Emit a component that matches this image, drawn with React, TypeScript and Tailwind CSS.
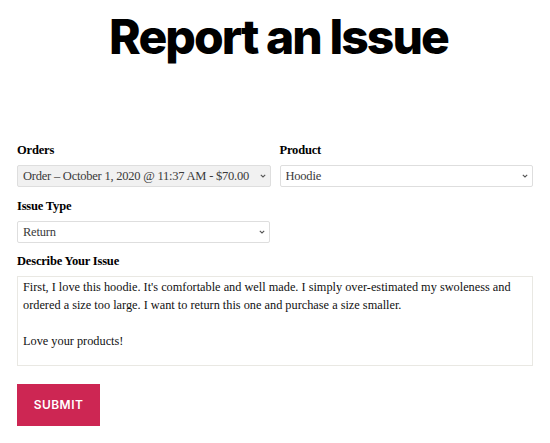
import { useState } from "react";

type SelectFieldProps = {
  label: string;
  value: string;
  options: string[];
  muted?: boolean;
};

function Chevron() {
  return (
    <svg
      className="pointer-events-none absolute right-[5px] top-1/2 -translate-y-1/2"
      width="6"
      height="4"
      viewBox="0 0 6 4"
      fill="none"
    >
      <path d="M.8.8 3 3 5.2.8" stroke="#555" strokeWidth="1.1" />
    </svg>
  );
}

function SelectField({ label, value, options, muted }: SelectFieldProps) {
  const [current, setCurrent] = useState(value);
  return (
    <div>
      <label className="block text-[12.5px] font-bold leading-[20px] tracking-[-0.015em] text-black">
        {label}
      </label>
      <div className="relative mt-[5px]">
        <select
          value={current}
          onChange={(e) => setCurrent(e.target.value)}
          className={`block h-[22px] w-full appearance-none rounded-[2px] border border-[#dedede] pl-[5px] pr-5 text-[12.5px] leading-[20px] tracking-[-0.018em] text-[#3a3a3a] outline-none ${
            muted ? "bg-[#f1f1f1]" : "bg-white"
          }`}
        >
          {options.map((o) => (
            <option key={o}>{o}</option>
          ))}
        </select>
        <Chevron />
      </div>
    </div>
  );
}

export default function App() {
  const [issue, setIssue] = useState(
    "First, I love this hoodie. It's comfortable and well made. I simply over-estimated my swoleness and ordered a size too large. I want to return this one and purchase a size smaller.\n\nLove your products!"
  );

  return (
    <div className="min-h-[443px] bg-white font-['Liberation_Serif',serif]">
      <h1 className="pl-[7px] pt-[13px] text-center font-['Inter',sans-serif] text-[48px] font-extrabold leading-none tracking-[-0.04em] text-black">
        Report an Issue
      </h1>

      <form className="mx-[17px] mt-[79px]" onSubmit={(e) => e.preventDefault()}>
        <div className="grid grid-cols-2 gap-x-[9px]">
          <SelectField
            label="Orders"
            value="Order – October 1, 2020 @ 11:37 AM - $70.00"
            options={["Order – October 1, 2020 @ 11:37 AM - $70.00"]}
            muted
          />
          <SelectField label="Product" value="Hoodie" options={["Hoodie"]} />
        </div>

        <div className="mt-[9px] w-[253px]">
          <SelectField label="Issue Type" value="Return" options={["Return", "Exchange", "Damaged"]} />
        </div>

        <div className="mt-[8px]">
          <label className="block text-[12.5px] font-bold leading-[20px] tracking-[-0.015em] text-black">
            Describe Your Issue
          </label>
          <textarea
            value={issue}
            onChange={(e) => setIssue(e.target.value)}
            className="mt-[5px] block h-[90px] w-full resize-none overflow-hidden border border-[#e9e8e3] px-[5px] pt-[1px] text-[12.3px] leading-[18px] text-[#111] outline-none"
          />
        </div>

        <button
          type="submit"
          className="mt-[18px] h-[42px] w-[83px] bg-[#cd2653] font-['Inter',sans-serif] text-[12px] font-semibold uppercase tracking-[0.04em] text-white"
        >
          Submit
        </button>
      </form>
    </div>
  );
}
